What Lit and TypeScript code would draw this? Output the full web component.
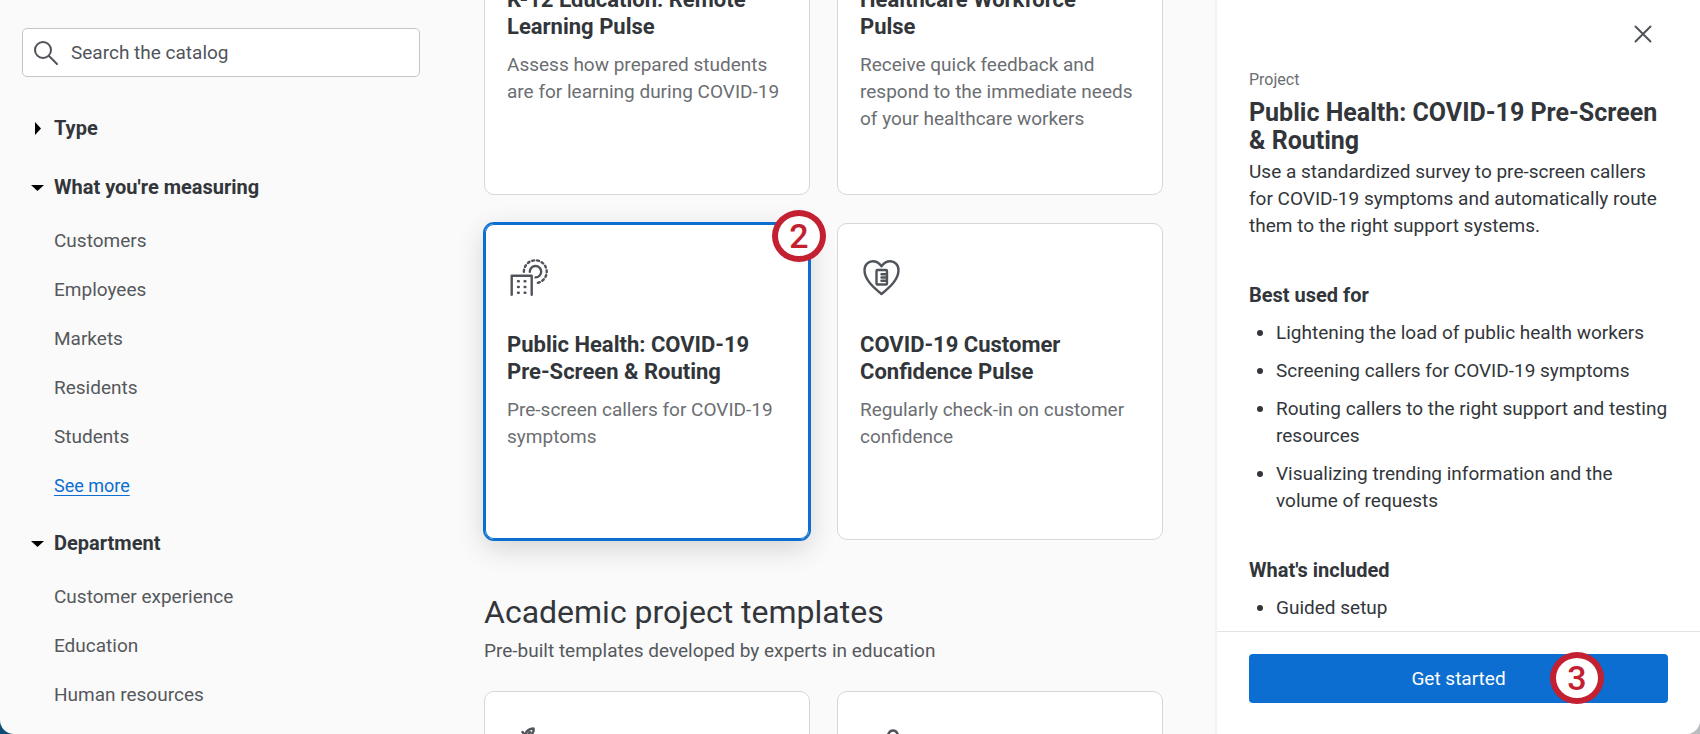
import { LitElement, html, css, svg, nothing, TemplateResult } from "lit";
import { customElement, property, query } from "lit/decorators.js";
import { classMap } from "lit/directives/class-map.js";

const buildingIcon = svg`
  <path d="M4.700 37.700V18.700H24.700V37.700" />
  <path d="M16.900 14.700A11.400 11.400 0 1 1 28.300 26.100" stroke-dasharray="2 2.880" />
  <path d="M22.800 14.700A5.700 5.700 0 1 1 28.500 20.400" />
  <path d="M11 24.300h.8M17.600 24.300h.8M11 30h.8M17.600 30h.8M11 35.700h.8M17.600 35.700h.8" />`;

const heartIcon = svg`
  <path d="M21.500 37C13 30 4.500 22.500 4.500 13.300C4.500 7.500 8.500 4.300 12.700 4.300C16.500 4.300 19.200 6.200 21.500 9.200C23.800 6.200 26.500 4.300 30.300 4.300C34.500 4.300 38.500 7.500 38.500 13.300C38.500 22.500 30 30 21.500 37Z" />
  <rect x="16.500" y="13" width="10.500" height="14.500" rx="1" />
  <path d="M21.500 17.300h5M21.500 20.500h5M21.500 23.700h5" />`;

const feathersIcon = svg`
  <path d="M17 14C18 7 21 3.500 26.500 3.500C27.500 7 24 11 19 13M23 7L18 14M15.500 7L17 9" />`;

const capIcon = svg`
  <path d="M25 14L29 8C30.500 4.700 35.500 4.700 37 8L41 14" />`;

interface Template {
  icon: TemplateResult;
  title?: string;
  text?: string;
  selected?: boolean;
  step?: number;
}

const covidTemplates: Template[] = [
  { icon: heartIcon, title: "K-12 Education: Remote Learning Pulse", text: "Assess how prepared students are for learning during COVID-19" },
  { icon: heartIcon, title: "Healthcare Workforce Pulse", text: "Receive quick feedback and respond to the immediate needs of your healthcare workers" },
  { icon: buildingIcon, title: "Public Health: COVID-19 Pre-Screen & Routing", text: "Pre-screen callers for COVID-19 symptoms", selected: true, step: 2 },
  { icon: heartIcon, title: "COVID-19 Customer Confidence Pulse", text: "Regularly check-in on customer confidence" },
];

const academicTemplates: Template[] = [{ icon: feathersIcon }, { icon: capIcon }];

const filters = [
  { name: "Type", open: false, items: [], more: false },
  { name: "What you're measuring", open: true, items: ["Customers", "Employees", "Markets", "Residents", "Students"], more: true },
  { name: "Department", open: true, items: ["Customer experience", "Education", "Human resources"], more: false },
];

const bestUsedFor = [
  "Lightening the load of public health workers",
  "Screening callers for COVID-19 symptoms",
  "Routing callers to the right support and testing resources",
  "Visualizing trending information and the volume of requests",
];

@customElement("step-badge")
class StepBadge extends LitElement {
  @property({ type: Number }) step = 0;

  static styles = css`
    :host {
      box-sizing: border-box;
      display: flex;
      align-items: center;
      justify-content: center;
      width: 54px;
      height: 52px;
      border: 6px solid #c32032;
      border-radius: 50%;
      background: #fff;
      color: #c32032;
      font: 500 34px/40px Roboto, sans-serif;
    }
  `;

  render() {
    return html`${this.step}`;
  }
}

@customElement("template-card")
class TemplateCard extends LitElement {
  @property({ attribute: false }) template!: Template;

  static styles = css`
    :host {
      display: grid;
      position: relative;
    }
    .card {
      box-sizing: border-box;
      min-height: 317px;
      padding: 32px 28px 32px 22px;
      display: flex;
      flex-direction: column;
      align-items: flex-start;
      border: 1px solid #d6d7d9;
      border-radius: 10px;
      background: #fff;
      color: #32363a;
      font: inherit;
      text-align: left;
      cursor: pointer;
    }
    .selected {
      border-color: #0b6ed0;
      box-shadow: inset 0 0 0 1px #0b6ed0, 0 0 0 1px #0b6ed0, 0 8px 28px rgba(0, 0, 0, 0.16);
    }
    .icon {
      width: 42px;
      height: 42px;
      margin: 1px 0 32px;
      fill: none;
      stroke: #50545a;
      stroke-width: 2.4;
      stroke-linecap: round;
      stroke-linejoin: round;
    }
    .title {
      margin-bottom: 11px;
      font-size: 22px;
      font-weight: 700;
    }
    .text {
      color: #6b6e72;
    }
    step-badge {
      position: absolute;
      top: -13px;
      right: -16px;
      z-index: 1;
    }
  `;

  render() {
    const { icon, title, text, selected, step } = this.template;
    return html`
      <button type="button" class=${classMap({ card: true, selected: !!selected })} aria-pressed=${selected ? "true" : "false"}>
        <svg class="icon" viewBox="0 0 42 42" aria-hidden="true">${icon}</svg>
        ${title ? html`<span class="title">${title}</span>` : nothing}
        ${text ? html`<span class="text">${text}</span>` : nothing}
      </button>
      ${step ? html`<step-badge .step=${step}></step-badge>` : nothing}
    `;
  }
}

@customElement("filter-sidebar")
class FilterSidebar extends LitElement {
  static styles = css`
    :host {
      display: block;
      padding: 28px 22px 0;
      overflow: hidden;
    }
    .search {
      box-sizing: border-box;
      height: 49px;
      display: flex;
      align-items: center;
      gap: 13px;
      padding: 0 11px;
      border: 1px solid #c4c6c8;
      border-radius: 5px;
      background: #fff;
    }
    .glass {
      flex: none;
      width: 24px;
      height: 24px;
      fill: none;
      stroke: #50545a;
      stroke-width: 2;
      stroke-linecap: round;
    }
    .field {
      flex: 1;
      min-width: 0;
      padding: 0;
      border: 0;
      outline: 0;
      background: none;
      color: #50545a;
      font: inherit;
    }
    .field::placeholder {
      color: #50545a;
      opacity: 1;
    }
    .filters {
      display: flex;
      flex-direction: column;
      padding-top: 38px;
    }
    .heading {
      display: flex;
      align-items: center;
      gap: 10px;
      margin: 0 0 32px;
      padding: 0 0 0 9px;
      border: 0;
      background: none;
      color: #32363a;
      font: inherit;
      font-size: 20px;
      font-weight: 700;
    }
    .open .heading {
      margin-bottom: 15px;
    }
    .caret {
      width: 13px;
      height: 13px;
      fill: #000;
    }
    .open .caret {
      transform: rotate(90deg);
    }
    .items {
      margin: 0 0 20px;
      padding: 0 0 0 32px;
      list-style: none;
      line-height: 49px;
    }
    .item {
      color: #55585c;
      text-decoration: none;
    }
    .more {
      color: #0b6ed0;
      font-size: 18px;
      text-underline-offset: 3px;
    }
  `;

  render() {
    return html`
      <label class="search">
        <svg class="glass" viewBox="0 0 24 24" aria-hidden="true">
          <circle cx="9" cy="9" r="8" />
          <path d="M15 15L23 23" />
        </svg>
        <input class="field" type="search" placeholder="Search the catalog" aria-label="Search the catalog" />
      </label>
      <nav class="filters">
        ${filters.map(
          (f) => html`
            <section class=${classMap({ open: f.open })}>
              <button type="button" class="heading" aria-expanded=${f.open ? "true" : "false"}>
                <svg class="caret" viewBox="0 0 13 13" aria-hidden="true"><path d="M4 0L10 6.500L4 13Z" /></svg>
                ${f.name}
              </button>
              ${f.open
                ? html`<ul class="items">
                    ${f.items.map((item) => html`<li><a class="item" href="#">${item}</a></li>`)}
                    ${f.more ? html`<li><a class="more" href="#">See more</a></li>` : nothing}
                  </ul>`
                : nothing}
            </section>
          `
        )}
      </nav>
    `;
  }
}

@customElement("detail-panel")
class DetailPanel extends LitElement {
  static styles = css`
    :host {
      box-sizing: border-box;
      display: flex;
      flex-direction: column;
      min-height: 0;
      border-left: 2px solid #f2f2f3;
      background: #fff;
      color: #32363a;
    }
    .body {
      flex: 1;
      min-height: 0;
      overflow: hidden;
      padding: 20px 32px 0;
    }
    .top {
      display: flex;
      justify-content: flex-end;
      margin-bottom: 22px;
    }
    .close {
      display: flex;
      width: 50px;
      height: 28px;
      align-items: center;
      justify-content: center;
      padding: 0;
      border: 0;
      background: none;
    }
    .cross {
      width: 18px;
      height: 18px;
      fill: none;
      stroke: #50545a;
      stroke-width: 2;
      stroke-linecap: round;
    }
    .kind {
      margin: 0;
      color: #6b6e72;
      font-size: 16px;
      line-height: 20px;
    }
    .title {
      margin: 0 0 3px;
      padding-top: 9px;
      font-size: 25px;
      line-height: 28px;
      font-weight: 700;
    }
    .summary {
      margin: 0;
    }
    .subtitle {
      margin: 43px 0 10px;
      font-size: 20px;
      font-weight: 700;
    }
    .list {
      display: flex;
      flex-direction: column;
      gap: 11px;
      margin: 0;
      padding-left: 27px;
    }
    .footer {
      position: relative;
      display: grid;
      padding: 22px 32px 31px;
      border-top: 1px solid #e3e4e5;
    }
    .start {
      height: 49px;
      border: 0;
      border-radius: 4px;
      background: #0b6ed0;
      color: #fff;
      font: inherit;
    }
    step-badge {
      position: absolute;
      top: 20px;
      right: 96px;
    }
  `;

  render() {
    return html`
      <div class="body">
        <div class="top">
          <button type="button" class="close" aria-label="Close">
            <svg class="cross" viewBox="0 0 18 18" aria-hidden="true"><path d="M1.500 1.500L16.500 16.500M16.500 1.500L1.500 16.500" /></svg>
          </button>
        </div>
        <p class="kind">Project</p>
        <h2 class="title">Public Health: COVID-19 Pre-Screen &amp; Routing</h2>
        <p class="summary">
          Use a standardized survey to pre-screen callers for COVID-19 symptoms and automatically route them to the right support systems.
        </p>
        <h3 class="subtitle">Best used for</h3>
        <ul class="list">
          ${bestUsedFor.map((use) => html`<li>${use}</li>`)}
        </ul>
        <h3 class="subtitle">What's included</h3>
        <ul class="list">
          <li>Guided setup</li>
        </ul>
      </div>
      <div class="footer">
        <button type="button" class="start">Get started</button>
        <step-badge .step=${3}></step-badge>
      </div>
    `;
  }
}

@customElement("app-root")
class AppRoot extends LitElement {
  @query(".catalog") catalog!: HTMLElement;

  static styles = css`
    :host {
      display: block;
      height: 100vh;
      background: linear-gradient(90deg, #0d4f74 50%, #b9bcbe 50%);
      font: 19px/27px Roboto, sans-serif;
    }
    .window {
      display: grid;
      grid-template-columns: 26% minmax(0, 1fr) 485px;
      grid-template-rows: minmax(0, 1fr);
      height: 100%;
      overflow: hidden;
      border-radius: 0 0 14px 14px;
      background: #fafafa;
      color: #32363a;
    }
    .catalog {
      overflow: auto;
      scrollbar-width: none;
      padding: 0 52px 0 42px;
    }
    .grid {
      display: grid;
      grid-template-columns: 1fr 1fr;
      gap: 28px 27px;
    }
    .section-title {
      margin: 52px 0 5px;
      font-size: 32px;
      line-height: 40px;
      font-weight: 400;
    }
    .section-text {
      margin: 0 0 27px;
      color: #55585c;
    }
  `;

  firstUpdated() {
    requestAnimationFrame(() => {
      this.catalog.scrollTop = 122;
    });
  }

  render() {
    return html`
      <div class="window">
        <filter-sidebar></filter-sidebar>
        <main class="catalog">
          <div class="grid">
            ${covidTemplates.map((t) => html`<template-card .template=${t}></template-card>`)}
          </div>
          <h2 class="section-title">Academic project templates</h2>
          <p class="section-text">Pre-built templates developed by experts in education</p>
          <div class="grid">
            ${academicTemplates.map((t) => html`<template-card .template=${t}></template-card>`)}
          </div>
        </main>
        <detail-panel></detail-panel>
      </div>
    `;
  }
}
